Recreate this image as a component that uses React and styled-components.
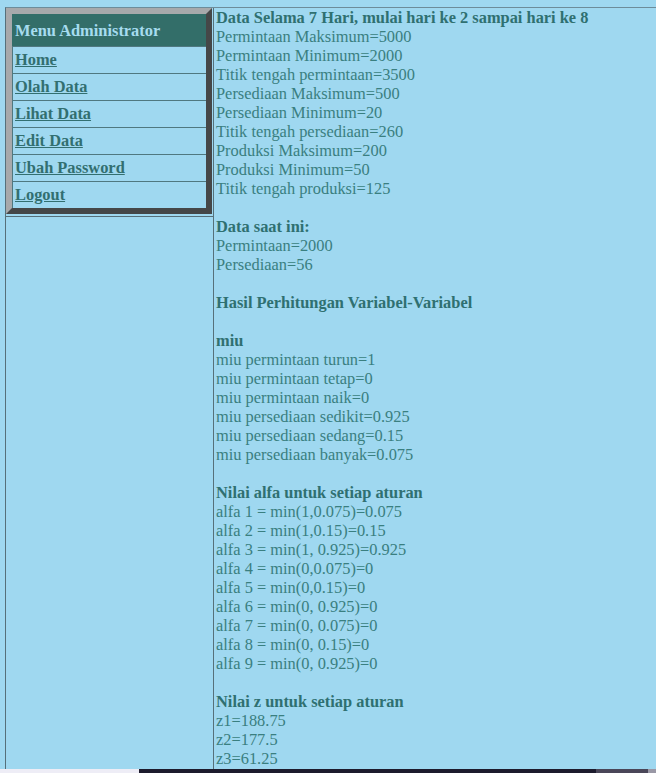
import React from 'react'
import styled, { createGlobalStyle } from 'styled-components'

const GlobalStyle = createGlobalStyle`
  html, body {
    margin: 0;
    padding: 0;
    background: #9fd8f0;
  }
  body {
    font-family: "Liberation Serif", "Times New Roman", serif;
    font-size: 16.4px;
    color: #367b7c;
    overflow: hidden;
  }
`

const Page = styled.div`
  padding: 7px 0 0 5px;
  height: 773px;
  box-sizing: border-box;
`

const Frame = styled.div`
  display: flex;
  border-top: 1px solid #6d8c9a;
  border-left: 1px solid #56707a;
  height: 100%;
`

const Sidebar = styled.div`
  width: 207px;
  display: flex;
  flex-direction: column;
  flex-shrink: 0;
`

const MenuCell = styled.div`
  padding: 0 1px 2px 0;
  border-bottom: 1px solid #56707a;
`

const EmptyCell = styled.div`
  flex: 1;
`

const Menu = styled.div`
  border-style: solid;
  border-width: 6px;
  border-color: #a7a9ab #454748 #454748 #a7a9ab;
  display: flex;
  flex-direction: column;
`

const MenuHeader = styled.div`
  background: #336e69;
  color: #a6dcef;
  font-weight: bold;
  height: 32px;
  line-height: 33px;
  padding-left: 3px;
`

const MenuItem = styled.a`
  display: block;
  height: 26px;
  line-height: 26px;
  padding-left: 2px;
  border-top: 1px solid #4f7880;
  border-left: 1px solid #4f7880;
  color: #326f70;
  font-weight: bold;
  text-decoration: underline;
  cursor: pointer;
`

const Content = styled.div`
  flex: 1;
  border-left: 1px solid #56707a;
  padding-left: 2px;
  line-height: 19px;
`

const Line = styled.div`
  white-space: nowrap;
  font-weight: ${(p) => (p.bold ? 'bold' : 'normal')};
  color: ${(p) => (p.bold ? '#2f7071' : '#3a7f80')};
  min-height: 19px;
`

const TaskStrip = styled.div`
  position: fixed;
  left: 0;
  right: 0;
  bottom: 0;
  height: 4px;
  display: flex;
`

const StripPart = styled.div`
  width: ${(p) => p.w};
  flex: ${(p) => (p.grow ? 1 : 'none')};
  background: ${(p) => p.bg};
`

const menuItems = ['Home', 'Olah Data', 'Lihat Data', 'Edit Data', 'Ubah Password', 'Logout']

const lines = [
  ['b', 'Data Selama 7 Hari, mulai hari ke 2 sampai hari ke 8'],
  ['', 'Permintaan Maksimum=5000'],
  ['', 'Permintaan Minimum=2000'],
  ['', 'Titik tengah permintaan=3500'],
  ['', 'Persediaan Maksimum=500'],
  ['', 'Persediaan Minimum=20'],
  ['', 'Titik tengah persediaan=260'],
  ['', 'Produksi Maksimum=200'],
  ['', 'Produksi Minimum=50'],
  ['', 'Titik tengah produksi=125'],
  ['', ''],
  ['b', 'Data saat ini:'],
  ['', 'Permintaan=2000'],
  ['', 'Persediaan=56'],
  ['', ''],
  ['b', 'Hasil Perhitungan Variabel-Variabel'],
  ['', ''],
  ['b', 'miu'],
  ['', 'miu permintaan turun=1'],
  ['', 'miu permintaan tetap=0'],
  ['', 'miu permintaan naik=0'],
  ['', 'miu persediaan sedikit=0.925'],
  ['', 'miu persediaan sedang=0.15'],
  ['', 'miu persediaan banyak=0.075'],
  ['', ''],
  ['b', 'Nilai alfa untuk setiap aturan'],
  ['', 'alfa 1 = min(1,0.075)=0.075'],
  ['', 'alfa 2 = min(1,0.15)=0.15'],
  ['', 'alfa 3 = min(1, 0.925)=0.925'],
  ['', 'alfa 4 = min(0,0.075)=0'],
  ['', 'alfa 5 = min(0,0.15)=0'],
  ['', 'alfa 6 = min(0, 0.925)=0'],
  ['', 'alfa 7 = min(0, 0.075)=0'],
  ['', 'alfa 8 = min(0, 0.15)=0'],
  ['', 'alfa 9 = min(0, 0.925)=0'],
  ['', ''],
  ['b', 'Nilai z untuk setiap aturan'],
  ['', 'z1=188.75'],
  ['', 'z2=177.5'],
  ['', 'z3=61.25'],
]

const App = () => {
  return (
    <>
      <GlobalStyle />
      <Page>
        <Frame>
          <Sidebar>
            <MenuCell>
              <Menu>
                <MenuHeader>Menu Administrator</MenuHeader>
                {menuItems.map((item) => (
                  <MenuItem key={item}>{item}</MenuItem>
                ))}
              </Menu>
            </MenuCell>
            <EmptyCell />
          </Sidebar>
          <Content>
            {lines.map(([kind, text], i) => (
              <Line key={i} bold={kind === 'b'}>
                {text}
              </Line>
            ))}
          </Content>
        </Frame>
      </Page>
      <TaskStrip>
        <StripPart w="139px" bg="#eeedf6" />
        <StripPart grow bg="#1d1b2d" />
        <StripPart w="52px" bg="#4a4658" />
        <StripPart w="8px" bg="#9a98a6" />
      </TaskStrip>
    </>
  )
}

export default App
